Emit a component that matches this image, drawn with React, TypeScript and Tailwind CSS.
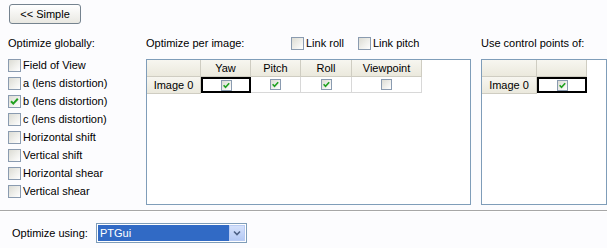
import { ReactNode } from 'react'

const font = { fontFamily: '"Liberation Sans", Arial, sans-serif' }

function Check({ small }: { small?: boolean }) {
  return (
    <svg viewBox="0 0 11 11" className={small ? 'w-[9px] h-[9px]' : 'w-[11px] h-[11px]'}>
      <path d="M2 5.2 L4.3 7.6 L8.8 2.8" fill="none" stroke="#21a121" strokeWidth="2" />
    </svg>
  )
}

function Box({ checked, small }: { checked?: boolean; small?: boolean }) {
  return (
    <span
      className={`flex items-center justify-center shrink-0 border border-[#8a9bb0] bg-linear-to-br from-[#dcdcd4] to-white ${
        small ? 'w-[11px] h-[11px]' : 'w-[13px] h-[13px]'
      }`}
    >
      {checked && <Check small={small} />}
    </span>
  )
}

const globals = [
  { name: 'Field of View', on: false },
  { name: 'a (lens distortion)', on: false },
  { name: 'b (lens distortion)', on: true },
  { name: 'c (lens distortion)', on: false },
  { name: 'Horizontal shift', on: false },
  { name: 'Vertical shift', on: false },
  { name: 'Horizontal shear', on: false },
  { name: 'Vertical shear', on: false },
]

function Head({ w, children }: { w: string; children?: ReactNode }) {
  return (
    <div
      className={`${w} h-[17px] flex items-center justify-center border-r border-b border-[#cfcdc2] bg-linear-to-b from-[#f7f6f0] to-[#ebe9dd]`}
    >
      {children}
    </div>
  )
}

function Cell({ w, selected, children }: { w: string; selected?: boolean; children?: ReactNode }) {
  return (
    <div
      className={`${w} h-[16px] flex items-center justify-center ${
        selected ? 'border-2 border-black bg-white' : 'border-r border-b border-[#d8d8d8]'
      }`}
    >
      {children}
    </div>
  )
}

export default function App() {
  return (
    <div style={font} className="w-[607px] h-[248px] bg-[#fcfcfe] text-[11px] text-black leading-[13px] flex flex-col">
      <div className="pl-[9px] pt-[4px]">
        <button className="w-[72px] h-[20px] rounded-[3px] border border-[#75838f] bg-linear-to-b from-white to-[#e9e8e2] text-[11px]">
          &lt;&lt; Simple
        </button>
      </div>

      <div className="flex pl-[8px] pt-[11px] h-[186px]">
        {/* Optimize globally */}
        <div className="w-[138px] flex flex-col">
          <div className="h-[16px] flex items-center">Optimize globally:</div>
          <div className="mt-[8px] flex flex-col">
            {globals.map((g) => (
              <div key={g.name} className="h-[18px] flex items-start gap-[2px]">
                <Box checked={g.on} />
                <span className="pt-[0px]">{g.name}</span>
              </div>
            ))}
          </div>
        </div>

        {/* Per image */}
        <div className="w-[325px] flex flex-col">
          <div className="h-[16px] flex items-center">
            <span className="w-[145px]">Optimize per image:</span>
            <span className="flex items-center gap-[2px]">
              <Box />
              Link roll
            </span>
            <span className="flex items-center gap-[2px] ml-[14px]">
              <Box />
              Link pitch
            </span>
          </div>
          <div className="mt-[8px] h-[146px] border border-[#7f9db9] bg-white">
            <div className="flex">
              <Head w="w-[54px]" />
              <Head w="w-[50px]">Yaw</Head>
              <Head w="w-[50px]">Pitch</Head>
              <Head w="w-[51px]">Roll</Head>
              <Head w="w-[70px]">Viewpoint</Head>
            </div>
            <div className="flex">
              <Head w="w-[54px] h-[16px]">Image 0</Head>
              <Cell w="w-[50px]" selected>
                <Box checked small />
              </Cell>
              <Cell w="w-[50px]">
                <Box checked small />
              </Cell>
              <Cell w="w-[51px]">
                <Box checked small />
              </Cell>
              <Cell w="w-[70px]">
                <Box small />
              </Cell>
            </div>
          </div>
        </div>

        {/* Control points */}
        <div className="ml-[10px] w-[126px] flex flex-col">
          <div className="h-[16px] flex items-center">Use control points of:</div>
          <div className="mt-[8px] h-[146px] border border-[#7f9db9] bg-white">
            <div className="flex">
              <Head w="w-[55px]" />
              <Head w="w-[50px]" />
            </div>
            <div className="flex">
              <Head w="w-[55px]">Image 0</Head>
              <Cell w="w-[50px]" selected>
                <Box checked small />
              </Cell>
            </div>
          </div>
        </div>
      </div>

      <div className="border-t border-[#a7a7a7] border-b border-b-white" />

      <div className="flex items-center pl-[12px] pt-[11px]">
        <span className="w-[84px]">Optimize using:</span>
        <div className="w-[151px] h-[20px] border border-[#7f9db9] bg-white flex p-[1px]">
          <div className="flex-1 bg-[#316ac5] text-white flex items-center pl-[2px]">PTGui</div>
          <div className="w-[16px] flex items-center justify-center bg-linear-to-b from-[#d5e1fb] to-[#b4c9f5] border border-[#b9cbf3]">
            <svg viewBox="0 0 8 6" className="w-[8px] h-[6px]">
              <path d="M1 1.5 L4 4.5 L7 1.5" fill="none" stroke="#4d6185" strokeWidth="1.6" />
            </svg>
          </div>
        </div>
      </div>
    </div>
  )
}
